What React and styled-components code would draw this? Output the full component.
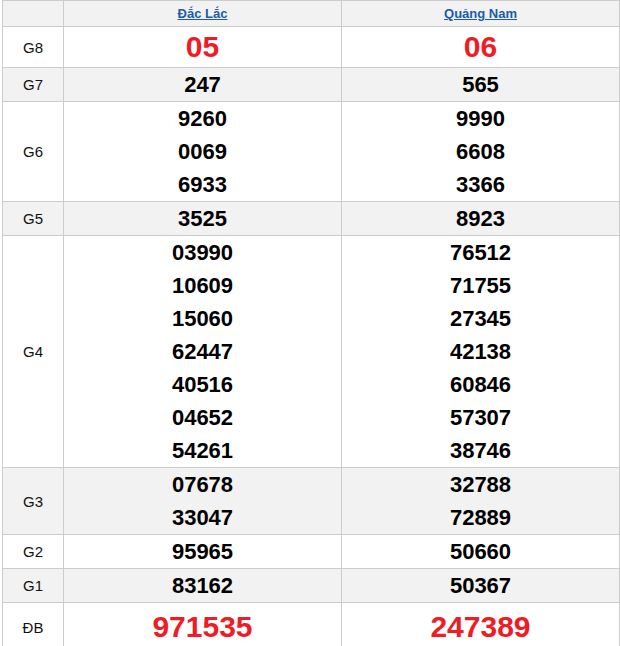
import React from 'react';
import styled, { createGlobalStyle } from 'styled-components';

const GlobalStyle = createGlobalStyle`
  body {
    margin: 0;
    padding: 0 0 0 2px;
    background: #fff;
    font-family: "Liberation Sans", Arial, sans-serif;
  }
`;

const TABLE = styled.table`
  width: 618px;
  border-collapse: collapse;
  table-layout: fixed;
  font-family: "Liberation Sans", Arial, sans-serif;
`;

const HEAD = styled.th`
  background: #f2f2f2;
  border: 1px solid #cccccc;
  height: 25px;
  padding: 0;
  font-weight: normal;
  font-size: 13px;
  text-align: center;
`;

const LINK = styled.a`
  color: #1a5bab;
  text-decoration: underline;
  font-weight: bold;
`;

const ROW = styled.tr`
  background: ${(p) => (p.$alt ? '#f2f2f2' : '#ffffff')};
`;

const LABEL = styled.td`
  border: 1px solid #cccccc;
  text-align: center;
  font-size: 15px;
  color: #111;
  padding: 0;
`;

const CELL = styled.td`
  border: 1px solid #cccccc;
  text-align: center;
  padding: 0;
`;

const NUM = styled.div`
  font-weight: bold;
  color: ${(p) => (p.$red ? '#ee1c25' : '#000')};
  font-size: ${(p) => p.$size || 22}px;
  line-height: ${(p) => p.$lh || 33}px;
`;

const rows = [
  { g: 'G8', a: ['05'], b: ['06'], red: true, size: 30, lh: 40 },
  { g: 'G7', a: ['247'], b: ['565'] },
  { g: 'G6', a: ['9260', '0069', '6933'], b: ['9990', '6608', '3366'] },
  { g: 'G5', a: ['3525'], b: ['8923'] },
  {
    g: 'G4',
    a: ['03990', '10609', '15060', '62447', '40516', '04652', '54261'],
    b: ['76512', '71755', '27345', '42138', '60846', '57307', '38746'],
  },
  { g: 'G3', a: ['07678', '33047'], b: ['32788', '72889'] },
  { g: 'G2', a: ['95965'], b: ['50660'] },
  { g: 'G1', a: ['83162'], b: ['50367'] },
  { g: 'ĐB', a: ['971535'], b: ['247389'], red: true, size: 30, lh: 48 },
];

function App() {
  return (
    <>
      <GlobalStyle />
      <TABLE>
        <colgroup>
          <col style={{ width: '61px' }} />
          <col />
          <col />
        </colgroup>
        <thead>
          <tr>
            <HEAD />
            <HEAD><LINK href="#">Đắc Lắc</LINK></HEAD>
            <HEAD><LINK href="#">Quảng Nam</LINK></HEAD>
          </tr>
        </thead>
        <tbody>
          {rows.map((r, i) => (
            <ROW key={r.g} $alt={i % 2 === 1}>
              <LABEL>{r.g}</LABEL>
              <CELL>
                {r.a.map((n, j) => (
                  <NUM key={j} $red={r.red} $size={r.size} $lh={r.lh}>{n}</NUM>
                ))}
              </CELL>
              <CELL>
                {r.b.map((n, j) => (
                  <NUM key={j} $red={r.red} $size={r.size} $lh={r.lh}>{n}</NUM>
                ))}
              </CELL>
            </ROW>
          ))}
        </tbody>
      </TABLE>
    </>
  );
}

export default App;
